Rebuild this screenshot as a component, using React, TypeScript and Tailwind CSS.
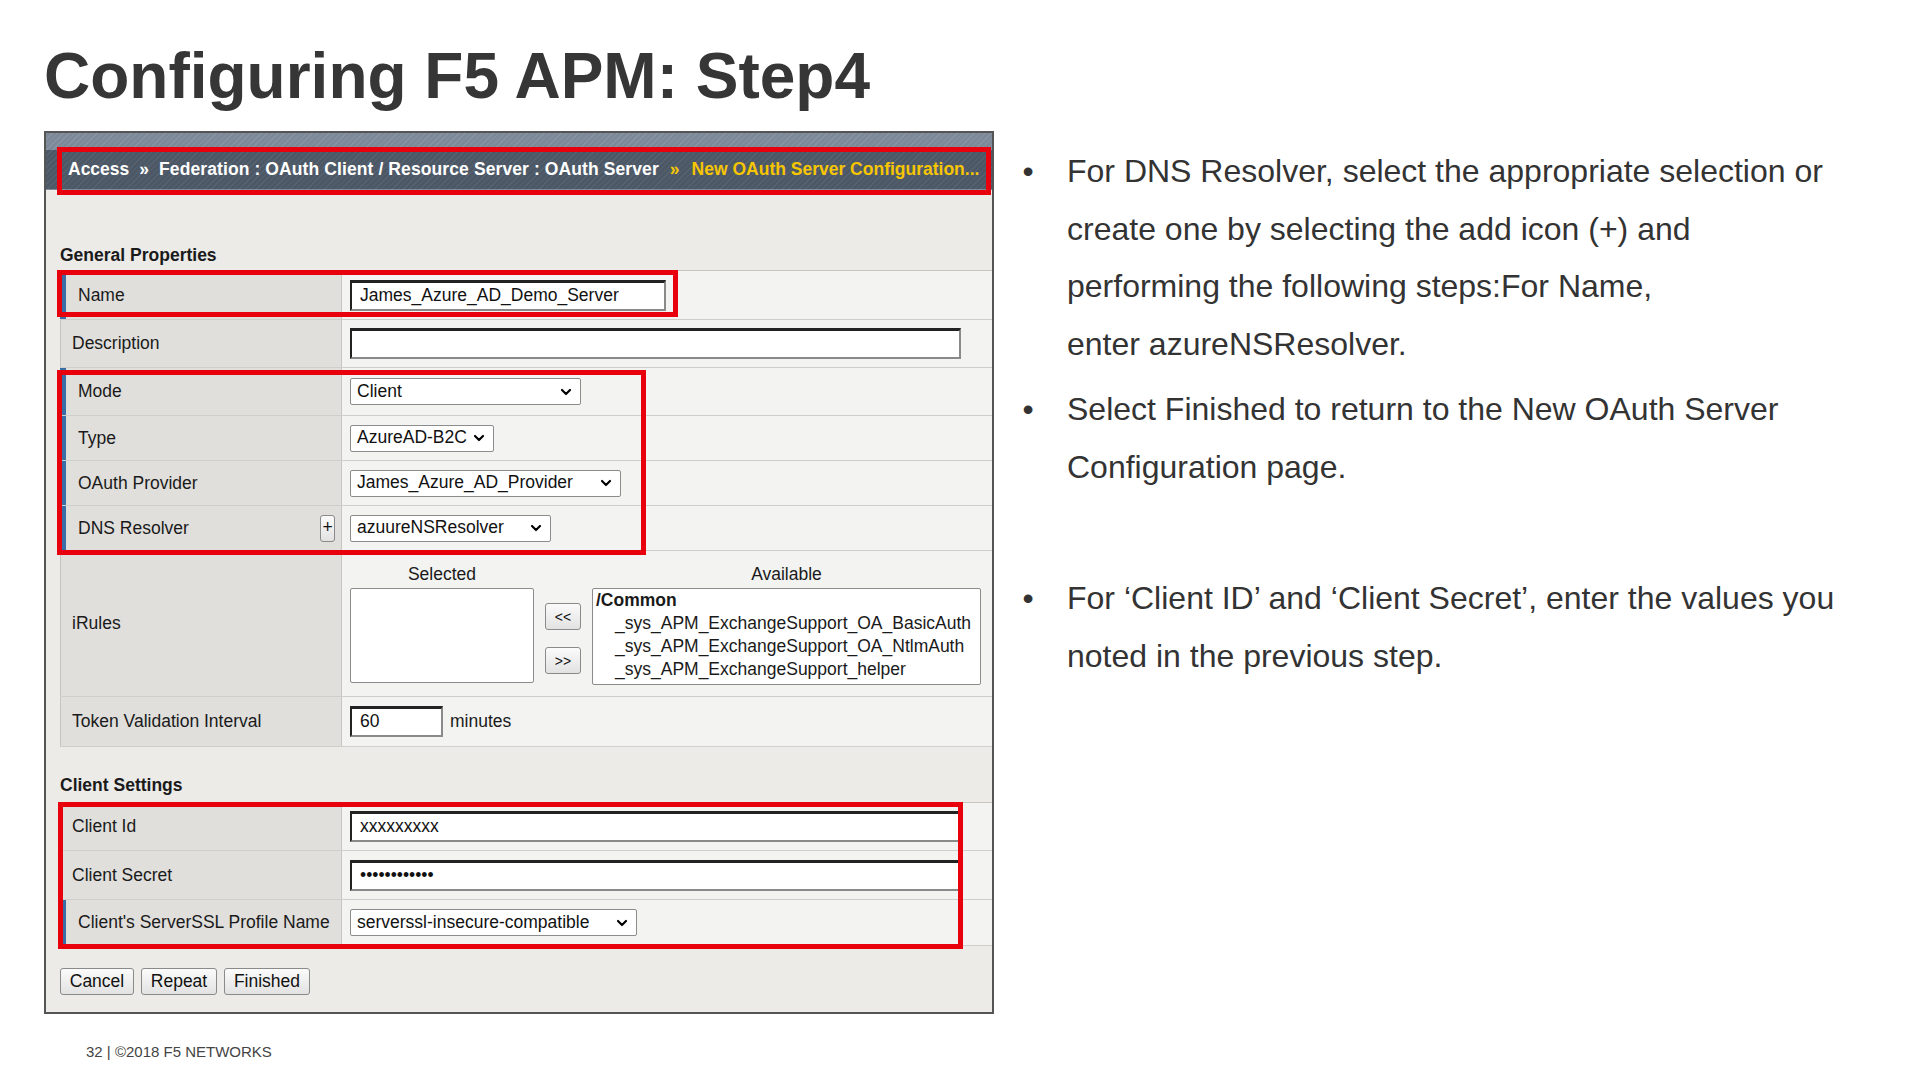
import { ChevronDown } from "lucide-react";
import type { ReactNode } from "react";

const Select = ({ value, width }: { value: string; width: string }) => (
  <div className={`flex h-[27px] items-center justify-between rounded-[2px] border border-[#8c8c8c] bg-white pl-[6px] pr-[6px] text-[17.5px] leading-none text-[#111] ${width}`}>
    <span>{value}</span>
    <ChevronDown size={16} strokeWidth={3.2} className="text-black" />
  </div>
)

const TextInput = ({ value, width }: { value?: string; width: string }) => (
  <div className={`flex h-[31px] items-center border-2 border-t-[3px] border-[#222] border-b-[#8a8a8a] border-r-[#8a8a8a] bg-white pl-[8px] text-[17.5px] leading-none text-[#111] ${width}`}>
    {value}
  </div>
)

const SmallButton = ({ children, width }: { children: ReactNode; width: string }) => (
  <div className={`flex h-[27px] items-center justify-center rounded-[3px] border border-[#8a8a8a] bg-gradient-to-b from-[#fbfbfb] to-[#e2e2e2] text-[17.5px] leading-none text-[#111] ${width}`}>
    {children}
  </div>
)

const Row = ({
  label,
  required,
  height,
  plus,
  top,
  children,
}: {
  label: string;
  required?: boolean;
  height: string;
  plus?: boolean;
  top?: boolean;
  children?: ReactNode;
}) => (
  <div className={`flex border-b border-[#cfcecb] ${height}`}>
    <div
      className={`flex w-[282px] shrink-0 items-center justify-between border-r border-r-[#c6c5c2] bg-[#e0dfdc] pr-[6px] text-[17.5px] text-[#1a1a1a] ${
        required ? "border-l-[6px] border-l-[#3a6ca6] pl-[12px]" : "border-l border-l-[#c6c5c2] pl-[11px]"
      }`}
    >
      <span>{label}</span>
      {plus && <SmallButton width="w-[15px]">+</SmallButton>}
    </div>
    <div className={`flex flex-1 bg-[#f3f3f1] pl-[8px] ${top ? "items-start pt-[13px]" : "items-center"}`}>{children}</div>
  </div>
)

const RedBox = ({ className }: { className: string }) => (
  <div className={`pointer-events-none absolute border-[5px] border-[#e8000d] ${className}`} />
)

const App = () => {
  return (
    <div className="relative h-[1080px] w-[1920px] overflow-hidden bg-white font-['Liberation_Sans',Arial,sans-serif] text-[#333]">
      <h1 className="pl-[44px] pt-[44px] text-[64px] font-bold leading-[64px] text-[#363636]">Configuring F5 APM: Step4</h1>

      <div className="mt-[23px] flex pl-[44px]">
        {/* screenshot of the BIG-IP form */}
        <div className="relative w-[950px] shrink-0 border-2 border-[#555]">
          <div className="h-[57px] bg-[#7d8999] bg-[image:repeating-linear-gradient(135deg,rgba(255,255,255,0.09)_0px,rgba(255,255,255,0.09)_1px,transparent_1px,transparent_4px)] pt-[17px]">
            <div className="flex h-[39px] items-center bg-[#4d5867] bg-[image:repeating-linear-gradient(135deg,rgba(255,255,255,0.06)_0px,rgba(255,255,255,0.06)_1px,transparent_1px,transparent_4px)] pl-[22px] text-[17.5px] font-bold whitespace-nowrap text-white">
              <span>Access</span>
              <span className="mx-[10px]">»</span>
              <span className="tracking-[0.1px]">Federation : OAuth Client / Resource Server : OAuth Server</span>
              <span className="ml-[11px] mr-[12px] text-[#f7c600]">»</span>
              <span className="text-[#f7c600]">New OAuth Server Configuration...</span>
            </div>
          </div>

          <div className="bg-[#ecebe8] pb-[17px] pl-[14px] pt-[55px]">
            <div className="text-[17.5px] font-bold leading-[20px] text-[#1a1a1a]">General Properties</div>
            <div className="mt-[5px] border-t border-[#c6c5c2]">
              <Row label="Name" required height="h-[49px]">
                <TextInput value="James_Azure_AD_Demo_Server" width="w-[316px]" />
              </Row>
              <Row label="Description" height="h-[48px]">
                <TextInput width="w-[611px]" />
              </Row>
              <Row label="Mode" required height="h-[48px]">
                <Select value="Client" width="w-[231px]" />
              </Row>
              <Row label="Type" required height="h-[45px]">
                <Select value="AzureAD-B2C" width="w-[144px]" />
              </Row>
              <Row label="OAuth Provider" required height="h-[45px]">
                <Select value="James_Azure_AD_Provider" width="w-[271px]" />
              </Row>
              <Row label="DNS Resolver" required plus height="h-[45px]">
                <Select value="azuureNSResolver" width="w-[201px]" />
              </Row>
              <Row label="iRules" height="h-[146px]" top>
                <div className="flex flex-col">
                  <div className="flex text-[17.5px] leading-[20px] text-[#1a1a1a]">
                    <div className="w-[184px] text-center">Selected</div>
                    <div className="w-[58px]" />
                    <div className="w-[389px] text-center">Available</div>
                  </div>
                  <div className="mt-[4px] flex items-start">
                    <div className="h-[95px] w-[184px] rounded-[2px] border border-[#8c8c8c] bg-white" />
                    <div className="flex w-[58px] flex-col items-center gap-[17px] pt-[15px]">
                      <SmallButton width="w-[36px]">
                        <span className="text-[14px]">&lt;&lt;</span>
                      </SmallButton>
                      <SmallButton width="w-[36px]">
                        <span className="text-[14px]">&gt;&gt;</span>
                      </SmallButton>
                    </div>
                    <div className="h-[97px] w-[389px] rounded-[2px] border border-[#8c8c8c] bg-white pl-[3px] text-[17.5px] leading-[23px] whitespace-nowrap text-[#1a1a1a]">
                      <div className="font-bold">/Common</div>
                      <div className="pl-[19px]">_sys_APM_ExchangeSupport_OA_BasicAuth</div>
                      <div className="pl-[19px]">_sys_APM_ExchangeSupport_OA_NtlmAuth</div>
                      <div className="pl-[19px]">_sys_APM_ExchangeSupport_helper</div>
                    </div>
                  </div>
                </div>
              </Row>
              <Row label="Token Validation Interval" height="h-[50px]">
                <TextInput value="60" width="w-[93px]" />
                <span className="ml-[7px] text-[17.5px] text-[#1a1a1a]">minutes</span>
              </Row>
            </div>

            <div className="mt-[28px] text-[17.5px] font-bold leading-[20px] text-[#1a1a1a]">Client Settings</div>
            <div className="mt-[7px] border-t border-[#c6c5c2]">
              <Row label="Client Id" height="h-[48px]">
                <TextInput value="xxxxxxxxx" width="w-[611px]" />
              </Row>
              <Row label="Client Secret" height="h-[49px]">
                <TextInput value="••••••••••••" width="w-[611px]" />
              </Row>
              <Row label="Client's ServerSSL Profile Name" required height="h-[46px]">
                <Select value="serverssl-insecure-compatible" width="w-[287px]" />
              </Row>
            </div>

            <div className="mt-[22px] flex gap-[7px]">
              <SmallButton width="w-[74px]">Cancel</SmallButton>
              <SmallButton width="w-[76px]">Repeat</SmallButton>
              <SmallButton width="w-[86px]">Finished</SmallButton>
            </div>
          </div>

          <RedBox className="left-[11px] top-[14px] h-[48px] w-[934px]" />
          <RedBox className="left-[11px] top-[137px] h-[47px] w-[621px]" />
          <RedBox className="left-[11px] top-[237px] h-[185px] w-[589px]" />
          <RedBox className="left-[12px] top-[669px] h-[147px] w-[905px]" />
        </div>

        {/* talking points */}
        <div className="ml-[26px] pt-[12px] text-[32px] leading-[57.5px] whitespace-nowrap text-[#333]">
          <div className="flex">
            <span className="w-[16px] text-center">•</span>
            <div className="ml-[31px]">
              For DNS Resolver, select the appropriate selection or
              <br />
              create one by selecting the add icon (+) and
              <br />
              performing the following steps:For Name,
              <br />
              enter azureNSResolver.
            </div>
          </div>
          <div className="mt-[8px] flex">
            <span className="w-[16px] text-center">•</span>
            <div className="ml-[31px]">
              Select Finished to return to the New OAuth Server
              <br />
              Configuration page.
            </div>
          </div>
          <div className="mt-[74px] flex">
            <span className="w-[16px] text-center">•</span>
            <div className="ml-[31px]">
              For ‘Client ID’ and ‘Client Secret’, enter the values you
              <br />
              noted in the previous step.
            </div>
          </div>
        </div>
      </div>

      <div className="mt-[29px] pl-[86px] text-[15px] leading-[17px] text-[#444]">32 | ©2018 F5 NETWORKS</div>
    </div>
  );
}

export default App;
